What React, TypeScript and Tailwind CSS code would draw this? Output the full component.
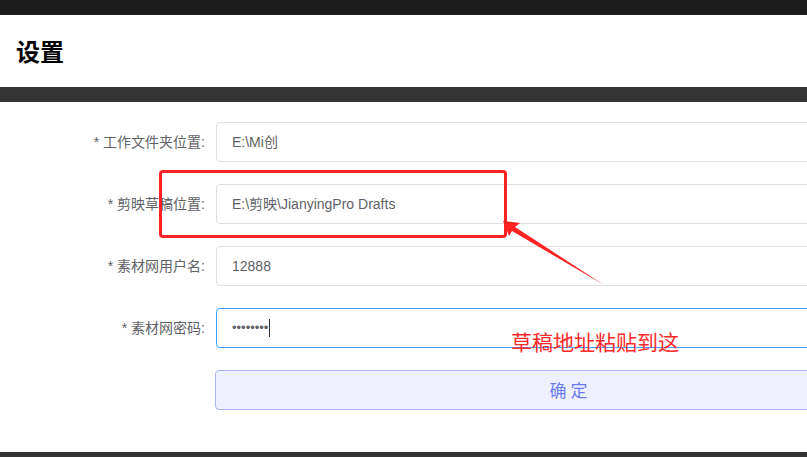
import React from "react";

const font = { fontFamily: '"Liberation Sans", "Noto Sans CJK SC", sans-serif' };

function Row({ label, children }: { label: string; children: React.ReactNode }) {
  return (
    <div className="flex items-center h-[40px]">
      <div className="w-[216px] shrink-0 pr-[11px] text-right text-[14px] text-[#606266]">{label}</div>
      {children}
    </div>
  );
}

function Field({ value, focused }: { value?: string; focused?: boolean }) {
  return (
    <div
      className={`w-[706px] shrink-0 h-[40px] rounded-[4px] border flex items-center pl-[15px] text-[14px] text-[#606266] ${
        focused ? "border-[#409eff]" : "border-[#dcdfe6]"
      }`}
    >
      {value}
    </div>
  );
}

export default function App() {
  return (
    <div className="relative w-[807px] h-[457px] overflow-hidden bg-white" style={font}>
      <div className="h-[15px] bg-[#1b1b1b]" />
      <div className="h-[72px] flex items-center pl-[16px]">
        <h1 className="text-[24px] font-bold text-black" style={{ fontFamily: '"Noto Sans CJK SC", sans-serif' }}>
          设置
        </h1>
      </div>
      <div className="h-[15px] bg-[#333333]" />
      <div className="flex flex-col gap-[22px] pt-[20px] h-[350px]">
        <Row label="* 工作文件夹位置:">
          <Field value="E:\Mi创" />
        </Row>
        <Row label="* 剪映草稿位置:">
          <Field value="E:\剪映\JianyingPro Drafts" />
        </Row>
        <Row label="* 素材网用户名:">
          <Field value="12888" />
        </Row>
        <Row label="* 素材网密码:">
          <div className="w-[706px] shrink-0 h-[40px] rounded-[4px] border border-[#409eff] flex items-center pl-[15px] text-[13px] text-[#606266]">
            <span>••••••••</span>
            <span className="ml-[1px] w-[1px] h-[18px] bg-[#303133]" />
          </div>
        </Row>
        <div className="flex">
          <div className="w-[215px] shrink-0" />
          <button
            className="w-[707px] shrink-0 h-[40px] rounded-[4px] border border-[#aab3f8] bg-[#eff0fd] text-[#6b7cf2] text-[17px]"
            style={{ fontFamily: '"Noto Sans CJK SC", sans-serif' }}
          >
            确 定
          </button>
        </div>
      </div>
      <div className="h-[10px] bg-[#333333]" />

      {/* annotations */}
      <div className="absolute left-[159px] top-[170px] w-[348px] h-[68px] border-[3px] border-[#ff2222] rounded-[4px]" />
      <svg className="absolute left-0 top-0" width="807" height="457" viewBox="0 0 807 457">
        <polygon points="503,221 520,223 515,227 604,285 512,231 509,236" fill="#ff2222" />
      </svg>
      <div
        className="absolute left-[511px] top-[327px] text-[21px] leading-[28px] text-[#ff2a2a]"
        style={{ fontFamily: '"Noto Sans CJK SC", sans-serif' }}
      >
        草稿地址粘贴到这
      </div>
    </div>
  );
}
